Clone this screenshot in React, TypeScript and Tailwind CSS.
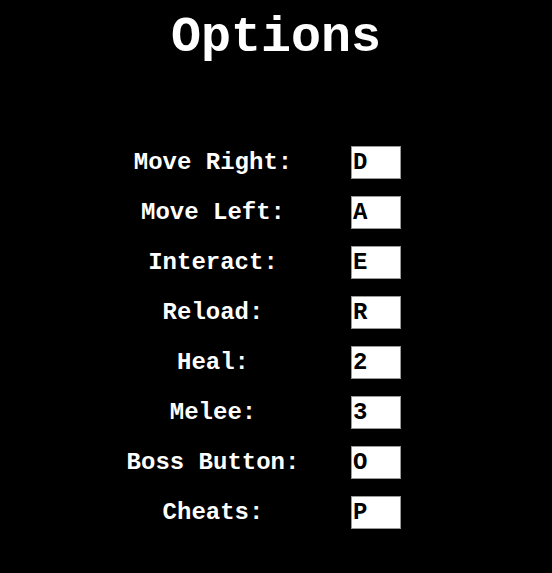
import React from "react";

const rows: [string, string][] = [
  ["Move Right:", "D"],
  ["Move Left:", "A"],
  ["Interact:", "E"],
  ["Reload:", "R"],
  ["Heal:", "2"],
  ["Melee:", "3"],
  ["Boss Button:", "O"],
  ["Cheats:", "P"],
];

export default function App() {
  return (
    <div className="min-h-screen bg-black font-['Liberation_Mono',monospace] font-bold text-white">
      <h1 className="pt-[10px] text-center text-[50px] leading-[56px]">Options</h1>
      <div className="ml-[113px] mt-[80px] grid grid-cols-[200px_50px] gap-x-[38px] gap-y-[17px]">
        {rows.map(([label, key]) => (
          <React.Fragment key={label}>
            <div className="flex h-[33px] items-center justify-center pt-[1px] text-[24px]">{label}</div>
            <input
              readOnly
              value={key}
              className="h-[33px] w-[50px] border border-[#9a9a9a] bg-white pl-[1px] text-[24px] font-bold text-black outline-none"
            />
          </React.Fragment>
        ))}
      </div>
    </div>
  );
}
